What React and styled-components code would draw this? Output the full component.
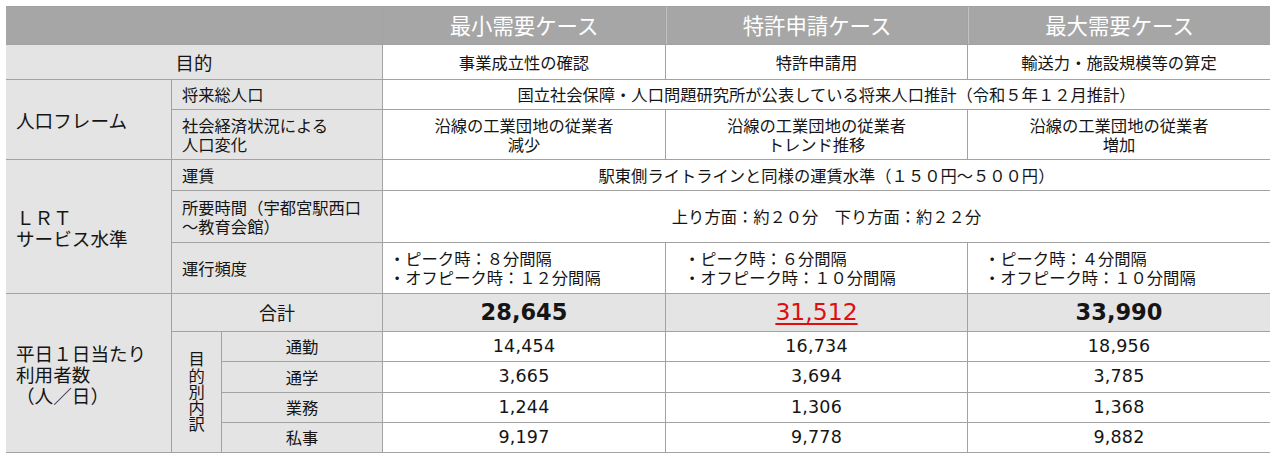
import React from "react";
import styled, { createGlobalStyle } from "styled-components";

const Global = createGlobalStyle`
  html, body { margin: 0; padding: 0; background: #ffffff; }
  body { font-family: "Noto Sans CJK JP", "Noto Sans", sans-serif; color: #151515; }
`;

const Page = styled.div`
  padding: 6px 0 0 6px;
  width: 1280px;
  height: 458px;
  box-sizing: border-box;
  overflow: hidden;
`;

const Table = styled.div`
  display: grid;
  grid-template-columns: 165px 49px 160px 282px 301px 302px;
  grid-template-rows: 37px 34px 29px 49px 30px 51px 50px 37px 29px 30px 29px 29px;
  gap: 1px;
  padding: 1px 0;
  width: 1264px;
  background: #a2a2a2;
`;

const Cell = styled.div`
  grid-column: ${(p) => p.$col};
  grid-row: ${(p) => p.$row};
  background: ${(p) => p.$bg || "#ffffff"};
  display: flex;
  align-items: center;
  justify-content: ${(p) => (p.$left ? "flex-start" : "center")};
  text-align: ${(p) => (p.$left ? "left" : "center")};
  padding-left: ${(p) => p.$pad || 0}px;
  font-size: ${(p) => p.$size || 16.3}px;
  line-height: 1.14;
  white-space: pre-line;
  box-sizing: border-box;
  color: #151515;
`;

const HeadCell = styled(Cell)`
  background: #a6a6a6;
  color: #ffffff;
  font-size: 21.4px;
  border-left: ${(p) => (p.$sep ? "1px solid #c2c2c2" : "none")};
`;

const BigLabel = styled(Cell)`
  background: #e4e4e4;
  font-size: 18.6px;
  line-height: 1.13;
  padding-left: 10px;
`;

const SubLabel = styled(Cell)`
  background: #e4e4e4;
`;

const Vertical = styled.span`
  writing-mode: vertical-rl;
  text-orientation: upright;
  font-size: 16.3px;
  line-height: 1;
  letter-spacing: 0;
`;

const Num = styled(Cell)`
  font-family: "DejaVu Sans", "Verdana", sans-serif;
  font-size: 17.5px;
  letter-spacing: 0.2px;
`;

const Total = styled(Cell)`
  background: #e4e4e4;
  font-family: "DejaVu Sans", sans-serif;
  font-size: ${(p) => (p.$hl ? 23.5 : 22.5)}px;
  font-weight: ${(p) => (p.$hl ? 400 : 700)};
  color: ${(p) => (p.$hl ? "#dd0f0f" : "#151515")};
  text-decoration: ${(p) => (p.$hl ? "underline" : "none")};
  text-decoration-thickness: 2px;
  text-underline-offset: 3px;
`;

const cases = ["最小需要ケース", "特許申請ケース", "最大需要ケース"];
const purposes = ["事業成立性の確認", "特許申請用", "輸送力・施設規模等の算定"];
const change = [
  "沿線の工業団地の従業者\n減少",
  "沿線の工業団地の従業者\nトレンド推移",
  "沿線の工業団地の従業者\n増加",
];
const freq = [
  { t: "・ピーク時：８分間隔\n・オフピーク時：１２分間隔", pad: 6 },
  { t: "・ピーク時：６分間隔\n・オフピーク時：１０分間隔", pad: 18 },
  { t: "・ピーク時：４分間隔\n・オフピーク時：１０分間隔", pad: 16 },
];
const totals = ["28,645", "31,512", "33,990"];
const breakdown = [
  { label: "通勤", v: ["14,454", "16,734", "18,956"] },
  { label: "通学", v: ["3,665", "3,694", "3,785"] },
  { label: "業務", v: ["1,244", "1,306", "1,368"] },
  { label: "私事", v: ["9,197", "9,778", "9,882"] },
];

export default function App() {
  return (
    <Page>
      <Global />
      <Table>
        <HeadCell $col="1 / 4" $row="1" />
        {cases.map((c, i) => (
          <HeadCell key={c} $col={`${4 + i}`} $row="1" $sep={i > 0}>
            {c}
          </HeadCell>
        ))}

        <SubLabel $col="1 / 4" $row="2" $size={18.4}>目的</SubLabel>
        {purposes.map((p, i) => (
          <Cell key={p} $col={`${4 + i}`} $row="2">{p}</Cell>
        ))}

        <BigLabel $col="1" $row="3 / 5" $left>人口フレーム</BigLabel>
        <SubLabel $col="2 / 4" $row="3" $left $pad={10}>将来総人口</SubLabel>
        <Cell $col="4 / 7" $row="3">
          国立社会保障・人口問題研究所が公表している将来人口推計（令和５年１２月推計）
        </Cell>
        <SubLabel $col="2 / 4" $row="4" $left $pad={10}>
          {"社会経済状況による\n人口変化"}
        </SubLabel>
        {change.map((c, i) => (
          <Cell key={i} $col={`${4 + i}`} $row="4">{c}</Cell>
        ))}

        <BigLabel $col="1" $row="5 / 8" $left>{"ＬＲＴ\nサービス水準"}</BigLabel>
        <SubLabel $col="2 / 4" $row="5" $left $pad={10}>運賃</SubLabel>
        <Cell $col="4 / 7" $row="5">
          駅東側ライトラインと同様の運賃水準（１５０円～５００円）
        </Cell>
        <SubLabel $col="2 / 4" $row="6" $left $pad={10}>
          {"所要時間（宇都宮駅西口\n～教育会館）"}
        </SubLabel>
        <Cell $col="4 / 7" $row="6">上り方面：約２０分　下り方面：約２２分</Cell>
        <SubLabel $col="2 / 4" $row="7" $left $pad={10}>運行頻度</SubLabel>
        {freq.map((f, i) => (
          <Cell key={i} $col={`${4 + i}`} $row="7" $left $pad={f.pad}>{f.t}</Cell>
        ))}

        <BigLabel $col="1" $row="8 / 13" $left>
          {"平日１日当たり\n利用者数\n（人／日）"}
        </BigLabel>
        <SubLabel $col="2 / 4" $row="8" $size={18}>合計</SubLabel>
        {totals.map((t, i) => (
          <Total key={t} $col={`${4 + i}`} $row="8" $hl={i === 1}>{t}</Total>
        ))}
        <SubLabel $col="2" $row="9 / 13">
          <Vertical>目的別内訳</Vertical>
        </SubLabel>
        {breakdown.map((b, r) => (
          <React.Fragment key={b.label}>
            <SubLabel $col="3" $row={`${9 + r}`}>{b.label}</SubLabel>
            {b.v.map((v, i) => (
              <Num key={i} $col={`${4 + i}`} $row={`${9 + r}`}>{v}</Num>
            ))}
          </React.Fragment>
        ))}
      </Table>
    </Page>
  );
}
